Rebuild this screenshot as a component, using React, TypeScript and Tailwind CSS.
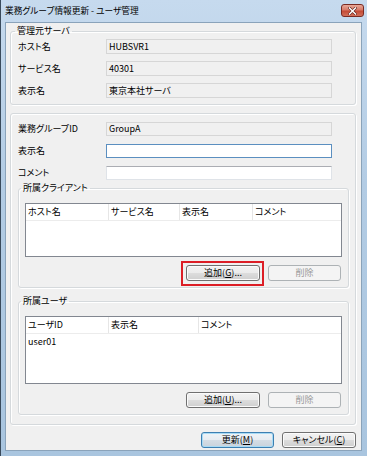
import React from "react";

const Btn = ({ children, w = "w-[74px]", variant = "normal" }: { children: React.ReactNode; w?: string; variant?: "normal" | "default" | "disabled" }) => {
  const base = `${w} h-[16px] rounded-[3px] border flex items-center justify-center text-[9px] leading-[12px]`;
  if (variant === "disabled")
    return <div className={`${base} border-[#adb2b5] bg-[#f4f4f4] text-[#9a9a9a]`}>{children}</div>;
  if (variant === "default")
    return (
      <div className={`${base} border-[#3c7fb1] bg-[linear-gradient(#eef3f7_0%,#e6ecf1_50%,#d5dde5_50%,#c9d3dc_100%)] shadow-[inset_0_0_0_1px_#a8dbf5] text-black`}>{children}</div>
    );
  return (
    <div className={`${base} border-[#707070] bg-[linear-gradient(#f2f2f2_0%,#ebebeb_50%,#dddddd_50%,#cfcfcf_100%)] shadow-[inset_0_0_0_1px_#fbfbfb] text-black`}>{children}</div>
  );
};

const Row = ({ label, children, h = "h-[15px]" }: { label: string; children: React.ReactNode; h?: string }) => (
  <div className={`flex items-center ${h}`}>
    <div className="w-[88px] shrink-0 leading-[12px]">{label}</div>
    {children}
  </div>
);

const ReadBox = ({ value, h = "h-[15px]" }: { value: string; h?: string }) => (
  <div className={`w-[226px] ${h} border border-[#d6d6d6] bg-[#f0f0f0] flex items-center pl-[2px] leading-[12px]`}>{value}</div>
);

export default function App() {
  return (
    <div className="w-[367px] h-[456px] flex flex-col bg-[linear-gradient(180deg,#c6daee_0%,#b3cce4_40%,#a9c5df_100%)] border-l border-[#3a4b5c] text-black text-[9px] font-['Noto_Sans_CJK_JP','Noto_Sans',sans-serif] [font-feature-settings:'palt']">
      {/* Title bar */}
      <div className="h-[22px] flex items-start justify-between pl-[4px] pr-[3px] pt-[3px] shrink-0">
        <div className="text-[8.7px] leading-[14px] text-black mt-[1px]">業務グループ情報更新 - ユーザ管理</div>
        <div className="w-[23px] h-[13px] mt-[1px] rounded-[3px] border border-[#7a2a22] bg-[linear-gradient(#e8a898_0%,#d77a68_45%,#c44a36_55%,#d2705a_100%)] flex items-center justify-center">
          <svg width="9" height="8" viewBox="0 0 9 8">
            <path d="M1.5 1 L7.5 7 M7.5 1 L1.5 7" stroke="#5a1a14" strokeWidth="2.6" strokeLinecap="square" />
            <path d="M1.5 1 L7.5 7 M7.5 1 L1.5 7" stroke="#ffffff" strokeWidth="1.5" strokeLinecap="square" />
          </svg>
        </div>
      </div>
      {/* Content */}
      <div className="flex-1 ml-[4px] mr-[5px] mb-[5px] border border-[#8aa3ba] bg-[#f0f0f0] pl-[4px] pr-[5px] flex flex-col">
        {/* 管理元サーバ */}
        <fieldset className="mt-[2px] border border-[#d5d9dc] rounded-[3px] shadow-[inset_1px_1px_0_#ffffff,1px_1px_0_#ffffff]">
          <legend className="ml-[4px] px-[2px] leading-[12px]">管理元サーバ</legend>
          <div className="pl-[7px] pt-[2px] pb-[6px] flex flex-col gap-[7px]">
            <Row label="ホスト名"><ReadBox value="HUBSVR1" /></Row>
            <Row label="サービス名"><ReadBox value="40301" /></Row>
            <Row label="表示名"><ReadBox value="東京本社サーバ" /></Row>
          </div>
        </fieldset>

        {/* group 2 */}
        <div className="mt-[8px] border border-[#d5d9dc] rounded-[3px] shadow-[inset_1px_1px_0_#ffffff,1px_1px_0_#ffffff] pl-[7px] pr-[6px] pt-[8px] pb-[9px] flex flex-col">
          <div className="flex flex-col gap-[8px]">
            <Row label="業務グループID" h="h-[14px]"><ReadBox value="GroupA" h="h-[14px]" /></Row>
            <Row label="表示名" h="h-[14px]">
              <div className="w-[226px] h-[14px] border border-[#5b8fc0] bg-white" />
            </Row>
            <Row label="コメント" h="h-[14px]">
              <div className="w-[226px] h-[14px] border border-[#dfe3e8] border-t-[#abadb3] bg-white" />
            </Row>
          </div>

          {/* 所属クライアント */}
          <fieldset className="mt-[2px] border border-[#d5d9dc] rounded-[3px] shadow-[inset_1px_1px_0_#ffffff,1px_1px_0_#ffffff]">
            <legend className="ml-[2px] px-[2px] leading-[12px]">所属クライアント</legend>
            <div className="px-[6px] pt-[9px] pb-[6px] flex flex-col">
              <div className="h-[54px] border border-[#828790] bg-white flex flex-col">
                <div className="h-[17px] flex border-b border-[#ececec] leading-[12px]">
                  <div className="w-[83px] pl-[2px] pt-[2px] border-r border-[#e6e6e6]">ホスト名</div>
                  <div className="w-[71px] pl-[2px] pt-[2px] border-r border-[#e6e6e6]">サービス名</div>
                  <div className="w-[73px] pl-[2px] pt-[2px] border-r border-[#e6e6e6]">表示名</div>
                  <div className="flex-1 pl-[2px] pt-[2px]">コメント</div>
                </div>
              </div>
              <div className="mt-[8px] flex justify-end gap-[8px] pr-[1px]">
                <div className="relative">
                  <Btn>追加(<span className="underline">G</span>)...</Btn>
                  <div className="absolute -left-[5px] -top-[4px] -right-[4px] -bottom-[5px] border-2 border-[#dc1e26] pointer-events-none" />
                </div>
                <Btn variant="disabled" w="w-[73px]">削除</Btn>
              </div>
            </div>
          </fieldset>

          {/* 所属ユーザ */}
          <fieldset className="mt-[7px] border border-[#d5d9dc] rounded-[3px] shadow-[inset_1px_1px_0_#ffffff,1px_1px_0_#ffffff]">
            <legend className="ml-[2px] px-[2px] leading-[12px]">所属ユーザ</legend>
            <div className="px-[6px] pt-[9px] pb-[6px] flex flex-col">
              <div className="h-[68px] border border-[#828790] bg-white flex flex-col leading-[12px]">
                <div className="h-[17px] flex border-b border-[#ececec]">
                  <div className="w-[83px] pl-[2px] pt-[2px] border-r border-[#e6e6e6]">ユーザID</div>
                  <div className="w-[90px] pl-[2px] pt-[2px] border-r border-[#e6e6e6]">表示名</div>
                  <div className="flex-1 pl-[2px] pt-[2px]">コメント</div>
                </div>
                <div className="pl-[2px] pt-[2px]">user01</div>
              </div>
              <div className="mt-[8px] flex justify-end gap-[8px] pr-[1px]">
                <Btn>追加(<span className="underline">U</span>)...</Btn>
                <Btn variant="disabled" w="w-[73px]">削除</Btn>
              </div>
            </div>
          </fieldset>
        </div>

        {/* bottom buttons */}
        <div className="mt-[7px] flex justify-end gap-[8px]">
          <Btn variant="default" w="w-[73px]">更新(<span className="underline">M</span>)</Btn>
          <Btn>キャンセル(<span className="underline">C</span>)</Btn>
        </div>
      </div>
    </div>
  );
}
